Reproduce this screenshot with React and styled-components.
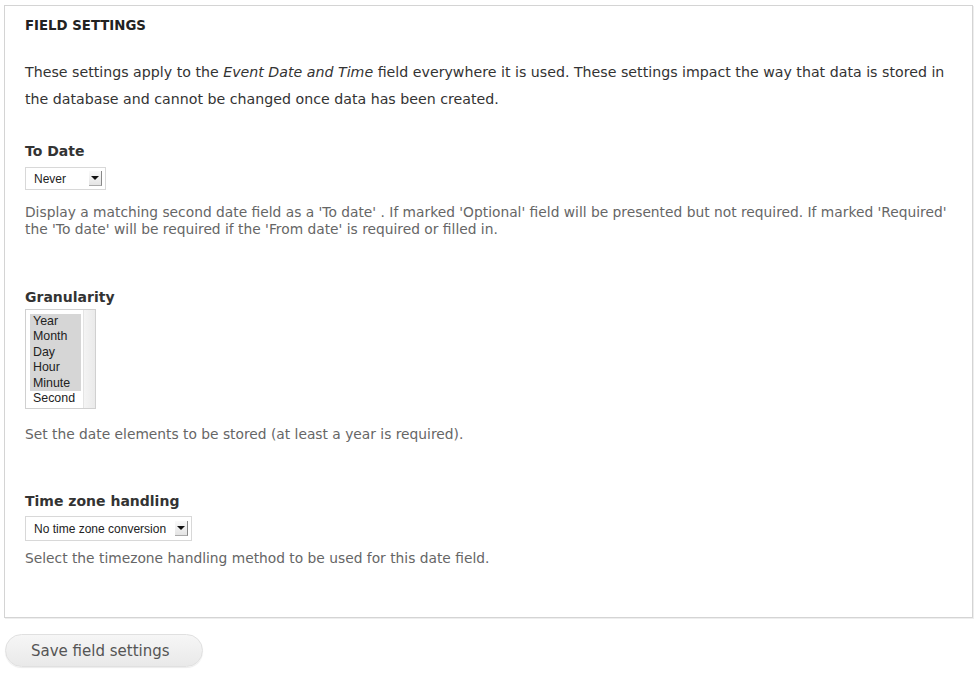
import React from 'react';
import styled, { createGlobalStyle } from 'styled-components';

const Global = createGlobalStyle`
  body {
    margin: 0;
    background: #fff;
    font-family: "DejaVu Sans", "Liberation Sans", sans-serif;
  }
`

const Page = styled.div`
  width: 979px;
  height: 677px;
  padding: 5px 0 0 4px;
  box-sizing: border-box;
`

const Fieldset = styled.div`
  width: 969px;
  height: 613px;
  box-sizing: border-box;
  border: 1px solid #d4d4d4;
  box-shadow: 1px 1px 0 #eee;
  padding: 12px 20px 0 20px;
  background: #fff;
`

const Legend = styled.h2`
  margin: 0;
  font-size: 13.3px;
  font-weight: bold;
  color: #222;
`

const Intro = styled.p`
  margin: 26px 0 0 0;
  font-size: 14.2px;
  line-height: 27px;
  color: #333;
`

const Field = styled.div`
  margin-top: ${(p) => p.top}px;
`

const Label = styled.div`
  font-size: 14px;
  font-weight: bold;
  color: #333;
  line-height: 18px;
`

const Select = styled.div`
  display: inline-flex;
  align-items: center;
  justify-content: space-between;
  width: ${(p) => p.width}px;
  height: ${(p) => p.height}px;
  box-sizing: border-box;
  margin-top: ${(p) => p.top}px;
  padding: 0 3px 0 8px;
  border: 1px solid #d8d8d8;
  background: #fff;
  font-family: "Liberation Sans", Arial, sans-serif;
  font-size: 12px;
  color: #222;
`

const Arrow = styled.span`
  position: relative;
  width: 12px;
  height: 14px;
  border-right: 1px solid #888;
  border-bottom: 1px solid #aaa;
  background: linear-gradient(#fafafa, #e4e4e4);

  &::after {
    content: '';
    position: absolute;
    left: 2px;
    top: 5px;
    border-left: 4px solid transparent;
    border-right: 4px solid transparent;
    border-top: 4px solid #111;
  }
`

const Desc = styled.div`
  margin-top: ${(p) => p.top}px;
  font-size: 13.8px;
  line-height: 17px;
  color: #666;
`

const ListBox = styled.div`
  display: flex;
  width: 71px;
  height: 100px;
  box-sizing: border-box;
  margin-top: 3px;
  border: 1px solid #d0d0d0;
  padding: 4px 0 0 4px;
  background: #fff;
`

const Options = styled.div`
  flex: 1;
  font-family: "Liberation Sans", Arial, sans-serif;
  font-size: 12.4px;
  color: #222;
`

const Option = styled.div`
  height: 15.4px;
  line-height: 15px;
  padding-left: 3px;
  margin-right: 2px;
  background: ${(p) => (p.selected ? '#d6d6d6' : 'transparent')};
`

const Scroll = styled.div`
  width: 11px;
  margin-top: -4px;
  border-left: 1px solid #e4e4e4;
  background: linear-gradient(90deg, #f4f4f4, #eaeaea);
`

const SaveButton = styled.button`
  margin: 16px 0 0 1px;
  width: 198px;
  height: 33px;
  border: 1px solid #e0e0e0;
  border-radius: 17px;
  background: linear-gradient(#f6f6f6, #e9e9e9);
  box-shadow: 0 1px 1px rgba(0, 0, 0, 0.08);
  font-family: "DejaVu Sans", sans-serif;
  font-size: 15px;
  color: #555;
  text-align: left;
  padding-left: 25px;
`

const granularity = [
  { name: 'Year', selected: true },
  { name: 'Month', selected: true },
  { name: 'Day', selected: true },
  { name: 'Hour', selected: true },
  { name: 'Minute', selected: true },
  { name: 'Second', selected: false },
]

const App = () => {
  return (
    <Page>
      <Global />
      <Fieldset>
        <Legend>FIELD SETTINGS</Legend>
        <Intro>
          These settings apply to the <em>Event Date and Time</em> field everywhere it is used. These settings impact the way that data is stored in the database and cannot be changed once data has been created.
        </Intro>

        <Field top={29}>
          <Label>To Date</Label>
          <Select width={81} height={23} top={7}>
            Never
            <Arrow />
          </Select>
          <Desc top={14}>
            Display a matching second date field as a 'To date' . If marked 'Optional' field will be presented but not required. If marked 'Required' the 'To date' will be required if the 'From date' is required or filled in.
          </Desc>
        </Field>

        <Field top={50}>
          <Label>Granularity</Label>
          <ListBox>
            <Options>
              {granularity.map((g) => (
                <Option key={g.name} selected={g.selected}>{g.name}</Option>
              ))}
            </Options>
            <Scroll />
          </ListBox>
          <Desc top={17}>Set the date elements to be stored (at least a year is required).</Desc>
        </Field>

        <Field top={49}>
          <Label>Time zone handling</Label>
          <Select width={167} height={25} top={6}>
            No time zone conversion
            <Arrow />
          </Select>
          <Desc top={9}>Select the timezone handling method to be used for this date field.</Desc>
        </Field>
      </Fieldset>
      <SaveButton>Save field settings</SaveButton>
    </Page>
  )
}

export default App;
